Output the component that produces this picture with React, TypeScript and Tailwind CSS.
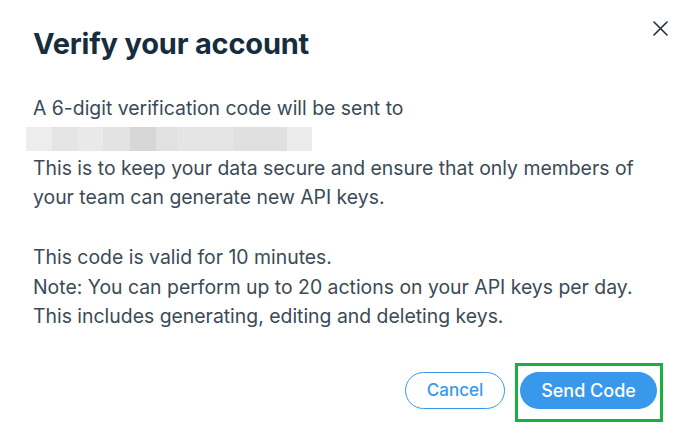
import React from "react";

const blocks = [
  { w: 26, c: "#ededed" },
  { w: 26, c: "#e4e4e4" },
  { w: 25, c: "#e9e9e9" },
  { w: 27, c: "#e3e3e3" },
  { w: 26, c: "#d7d7d7" },
  { w: 21, c: "#e1e1e1" },
  { w: 56, c: "#e5e5e5" },
  { w: 54, c: "#e0e0e0" },
  { w: 25, c: "#ececec" },
];

export default function App() {
  return (
    <div
      className="relative w-[689px] h-[442px] bg-white overflow-hidden"
      style={{ fontFamily: "Inter, 'Noto Sans', sans-serif" }}
    >
      <button className="absolute left-[651px] top-[19px] w-[19px] h-[19px] flex items-center justify-center">
        <svg width="15" height="15" viewBox="0 0 15 15" fill="none">
          <path d="M1 1L14 14M14 1L1 14" stroke="#1f2f3c" strokeWidth="1.6" strokeLinecap="round" />
        </svg>
      </button>

      <div className="pl-[33px] pr-[32px] pt-[26px]">
        <h1 className="text-[29px] leading-[36px] font-bold text-[#162d3d] tracking-[-0.2px]">
          Verify your account
        </h1>

        <div className="mt-[32px] text-[19.4px] leading-[29.75px] text-[#3b4a56]">
          <p>A 6-digit verification code will be sent to</p>
          <div className="h-[29.75px] -ml-[7px] pt-[3px]">
            <div className="flex h-[24px]">
              {blocks.map((b, i) => (
                <div key={i} className="h-full" style={{ width: b.w, backgroundColor: b.c }} />
              ))}
            </div>
          </div>
          <p>
            This is to keep your data secure and ensure that only members of
            <br />
            your team can generate new API keys.
          </p>
          <p className="mt-[29.75px]">
            This code is valid for 10 minutes.
            <br />
            Note: You can perform up to 20 actions on your API keys per day.
            <br />
            This includes generating, editing and deleting keys.
          </p>
        </div>

        <div className="mt-[40px] flex justify-end gap-[15px]">
          <button className="w-[100px] h-[37px] rounded-full border border-[#3899ec] text-[#3899ec] text-[17px] font-medium">
            Cancel
          </button>
          <button className="w-[137px] h-[37px] rounded-full bg-[#3899ec] text-white text-[18px] font-medium">
            Send Code
          </button>
        </div>
      </div>

      <div className="absolute left-[515px] top-[363px] w-[148px] h-[59px] border-[3px] border-[#17b041] pointer-events-none" />
    </div>
  );
}
